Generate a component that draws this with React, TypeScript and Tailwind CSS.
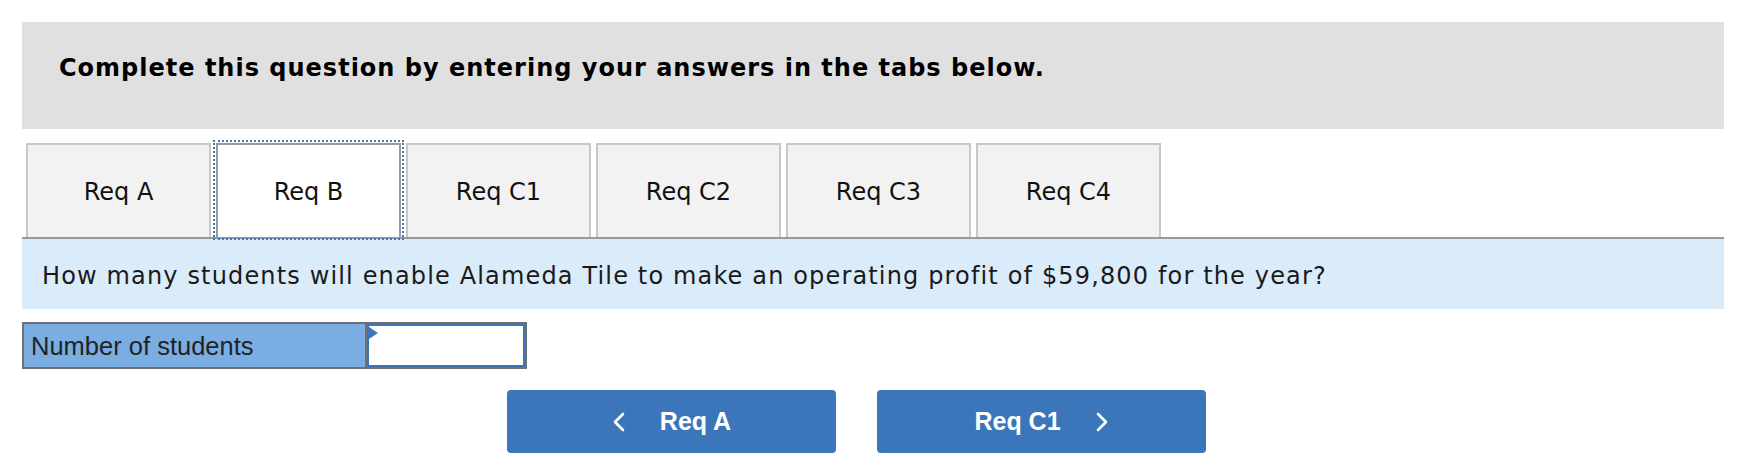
const tabs = ["Req A", "Req B", "Req C1", "Req C2", "Req C3", "Req C4"];

function Chevron({ dir }: { dir: "left" | "right" }) {
  return (
    <svg width="14" height="20" viewBox="0 0 14 20" className="shrink-0">
      <polyline
        points={dir === "left" ? "11,2 3,10 11,18" : "3,2 11,10 3,18"}
        fill="none"
        stroke="white"
        strokeWidth="2.6"
        strokeLinecap="round"
        strokeLinejoin="round"
      />
    </svg>
  );
}

export default function App() {
  return (
    <div className="h-[465px] w-[1757px] bg-white pl-[22px] pr-[33px] pt-[22px]">
      <div className="h-[107px] bg-[#e0e0e0] pl-[37px] pt-[32px]">
        <h2 className="font-['DejaVu_Sans',sans-serif] text-[24px] leading-[28px] font-bold tracking-[1px] text-black">
          Complete this question by entering your answers in the tabs below.
        </h2>
      </div>

      <div className="mt-[14px] flex gap-[5px] border-b-2 border-[#999999] pl-[4px]">
        {tabs.map((t) =>
          t === "Req B" ? (
            <div
              key={t}
              className="flex h-[94px] w-[185px] items-center justify-center border-2 border-b-0 border-[#9b9b9b] bg-white pt-[2px] font-['DejaVu_Sans',sans-serif] text-[24px] text-[#111] outline-[2.5px] outline-offset-[1px] outline-[#3b7bc4] outline-dotted"
            >
              {t}
            </div>
          ) : (
            <div
              key={t}
              className="flex h-[94px] w-[185px] items-center justify-center border-2 border-b-0 border-[#c8c8c8] bg-[#f2f2f2] pt-[2px] font-['DejaVu_Sans',sans-serif] text-[24px] text-[#111]"
            >
              {t}
            </div>
          )
        )}
      </div>

      <div className="flex h-[70px] items-center bg-[#daebf9] pl-[20px] pt-[3px] font-['DejaVu_Sans',sans-serif] text-[24px] tracking-[1.15px] text-[#1a1a1a]">
        How many students will enable Alameda Tile to make an operating profit of $59,800 for the year?
      </div>

      <div className="mt-[13px] flex h-[47px] w-[505px] border-2 border-[#6f6f6f]">
        <div className="flex w-[341px] items-center bg-[#7aaee2] pl-[7px] pt-[2px] font-['Liberation_Sans',Arial,sans-serif] text-[25.5px] text-[#222]">
          Number of students
        </div>
        <div className="relative flex-1 border-l-2 border-[#6f6f6f]">
          <div className="h-full w-full border-2 border-[#3b76b9] bg-white" />
          <svg width="10" height="12" viewBox="0 0 10 12" className="absolute left-[2px] top-[3px]">
            <polygon points="0,0 9,6 0,12" fill="#3b76b9" />
          </svg>
        </div>
      </div>

      <div className="mt-[21px] flex gap-[41px] pl-[485px]">
        <button className="flex h-[63px] w-[329px] items-center justify-center gap-[34px] rounded-[4px] bg-[#3a76b9] font-['Liberation_Sans',Arial,sans-serif] text-[25px] font-bold text-white">
          <Chevron dir="left" />
          <span>Req A</span>
        </button>
        <button className="flex h-[63px] w-[329px] items-center justify-center gap-[34px] rounded-[4px] bg-[#3a76b9] font-['Liberation_Sans',Arial,sans-serif] text-[25px] font-bold text-white">
          <span>Req C1</span>
          <Chevron dir="right" />
        </button>
      </div>
    </div>
  );
}
